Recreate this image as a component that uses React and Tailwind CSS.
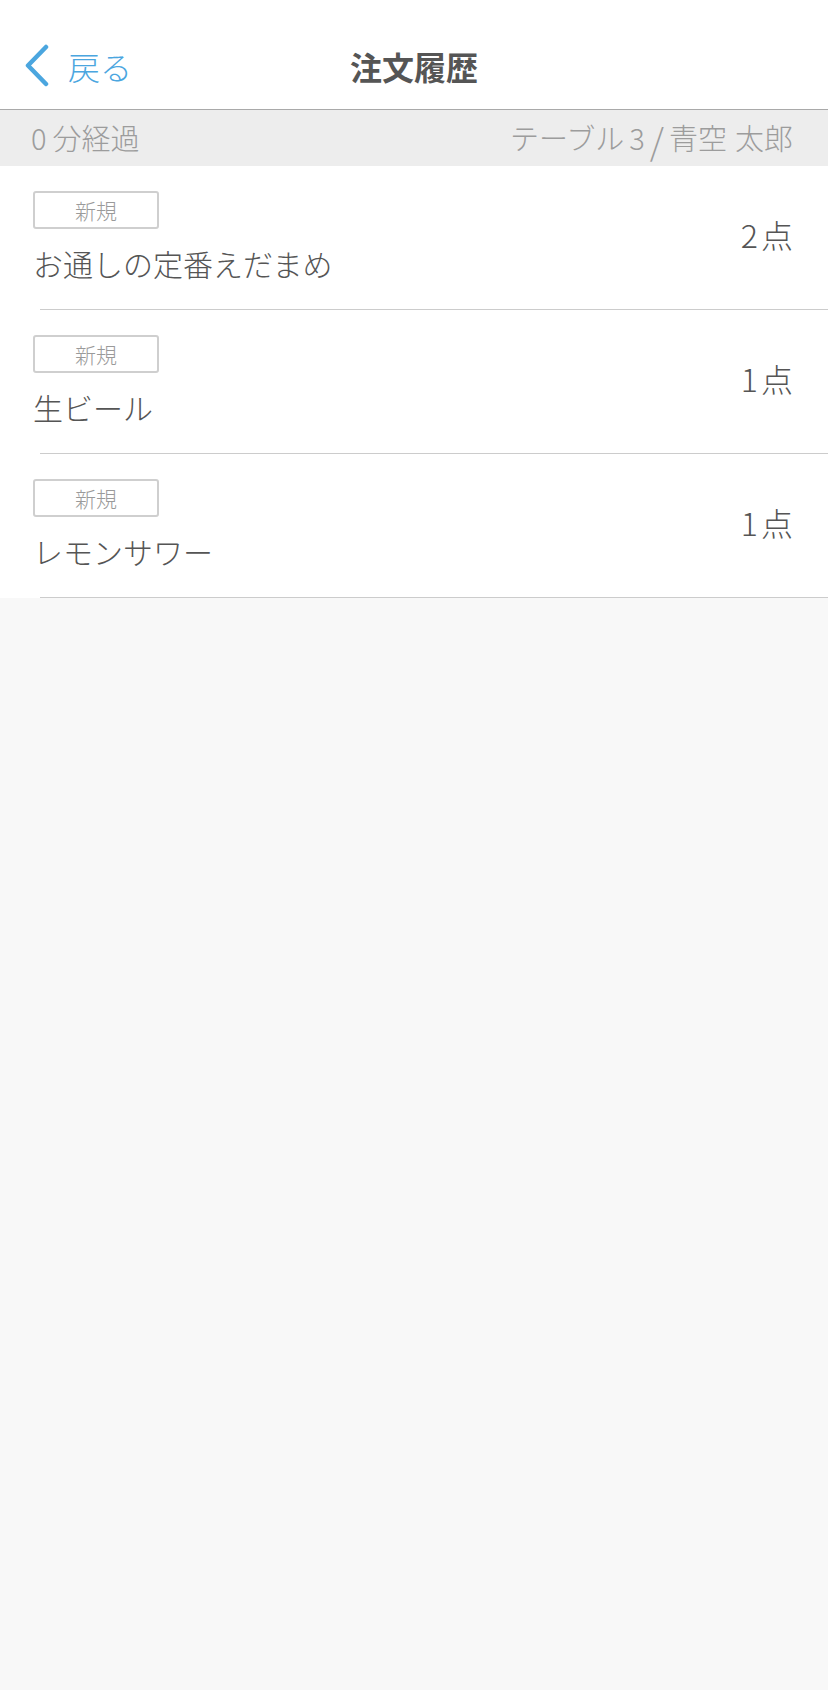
import React from 'react';

const orders = [
  { name: 'お通しの定番えだまめ', qty: '2' },
  { name: '生ビール', qty: '1' },
  { name: 'レモンサワー', qty: '1' },
];

const font = { fontFamily: '"Noto Sans CJK JP", "Noto Sans", sans-serif' };

const BackChevron = () => (
  <svg width="30" height="44" viewBox="0 0 30 44" className="shrink-0">
    <path d="M22 3 L4 21.5 L22 40" fill="none" stroke="#4ba6df" strokeWidth="4.5" strokeLinecap="round" strokeLinejoin="round" />
  </svg>
);

const OrderRow = ({ item }) => (
  <div>
    <div className="h-[143px] flex justify-between pl-[33px] pr-[35px] pt-[25px]">
      <div className="flex flex-col">
        <div className="w-[126px] h-[38px] border-2 border-[#cfcfcf] rounded-[3px] flex items-center justify-center text-[21px] leading-none text-[#9a9a9a] font-light">
          新規
        </div>
        <div className="mt-[14px] text-[30px] leading-[40px] text-[#555555] font-light">{item.name}</div>
      </div>
      <div className="pt-[23px] text-[32px] leading-[40px] text-[#555555] font-light">
        {item.qty}<span className="ml-[3px]">点</span>
      </div>
    </div>
    <div className="ml-[40px] border-b border-[#cccccc]" />
  </div>
);

export default function App() {
  return (
    <div className="min-h-[1690px] w-full bg-[#f8f8f8]" style={font}>
      <header className="h-[110px] bg-white border-b-[1.5px] border-[#a9a9a9] pt-[22px]">
        <div className="h-[88px] grid grid-cols-[1fr_auto_1fr] items-center">
          <button className="flex items-center gap-[14px] pl-[24px] text-[#4ba6df] text-[32px] font-light">
            <BackChevron />
            <span className="leading-none">戻る</span>
          </button>
          <h1 className="text-[32px] font-bold text-[#555555] leading-none">注文履歴</h1>
          <div />
        </div>
      </header>

      <div className="h-[56px] bg-[#ededed] flex items-center justify-between pl-[31px] pr-[35px] text-[29px] text-[#9c9c9c] font-light">
        <span>0<span className="ml-[6px]">分経過</span></span>
        <span className="flex items-center">
          テーブル<span className="ml-[5px]">3</span>
          <span className="mx-[5px] text-[36px] leading-none translate-y-[1px]">/</span>
          青空<span className="ml-[8px]">太郎</span>
        </span>
      </div>

      <div className="bg-white">
        {orders.map((item, i) => (
          <OrderRow key={i} item={item} />
        ))}
      </div>
    </div>
  );
}
